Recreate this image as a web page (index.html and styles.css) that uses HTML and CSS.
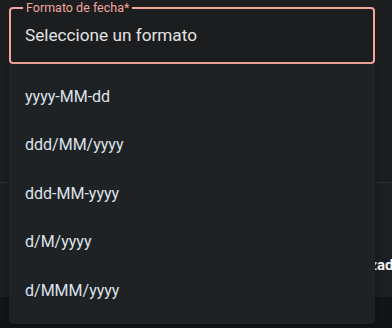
FILE: index.html
```html
<!DOCTYPE html>
<html lang="es">
<head>
<meta charset="utf-8">
<link rel="stylesheet" href="styles.css">
</head>
<body>
<div class="page">
  <div class="section top"></div>
  <div class="section row"><span class="row-text">Personalizado</span></div>
  <div class="section footer"></div>
</div>
<div class="select">
  <fieldset class="field">
    <legend class="label">Formato de fecha*</legend>
    <div class="value">Seleccione un formato</div>
  </fieldset>
  <ul class="menu">
    <li class="option">yyyy-MM-dd</li>
    <li class="option">ddd/MM/yyyy</li>
    <li class="option">ddd-MM-yyyy</li>
    <li class="option">d/M/yyyy</li>
    <li class="option">d/MMM/yyyy</li>
  </ul>
</div>
</body>
</html>
```
FILE: styles.css
```css
* { box-sizing: border-box; }
html, body { margin: 0; padding: 0; }
body {
  width: 392px;
  height: 328px;
  overflow: hidden;
  background: #1b1d1f;
  font-family: Roboto, "Noto Sans", sans-serif;
  position: relative;
}
.page { display: flex; flex-direction: column; height: 328px; }
.section.top { height: 183px; border-bottom: 1px solid #2b2e31; background: #1b1d1f; }
.section.row {
  height: 114px;
  background: #1c1f21;
  display: flex;
  align-items: center;
  justify-content: flex-end;
  padding-top: 50px;
}
.row-text {
  color: #f2f2f2;
  font-weight: 700;
  font-size: 15px;
  margin-right: -10px;
}
.section.footer { flex: 1; background: #121416; }

.select {
  position: absolute;
  left: 9px;
  top: 0;
  width: 366px;
}
.field {
  margin: 0;
  height: 64px;
  border: 2px solid #f2a69c;
  border-radius: 4px;
  padding: 0 14px;
  background: #1b1d1f;
}
.label {
  color: #f2a69c;
  font-size: 12.5px;
  padding: 0 3px;
  margin-left: -2px;
  line-height: 15px;
}
.value {
  color: #e3e3e3;
  font-size: 17.2px;
  line-height: 20px;
  padding-top: 10px;
}
.menu {
  list-style: none;
  margin: 0;
  padding: 8px 0 0;
  height: 260px;
  background: #1f2225;
  border-radius: 0 0 4px 4px;
  box-shadow: 0 2px 4px rgba(0,0,0,0.35);
}
.option {
  height: 48.5px;
  display: flex;
  align-items: center;
  padding-left: 16px;
  color: #dde3ea;
  font-size: 16px;
}
```
